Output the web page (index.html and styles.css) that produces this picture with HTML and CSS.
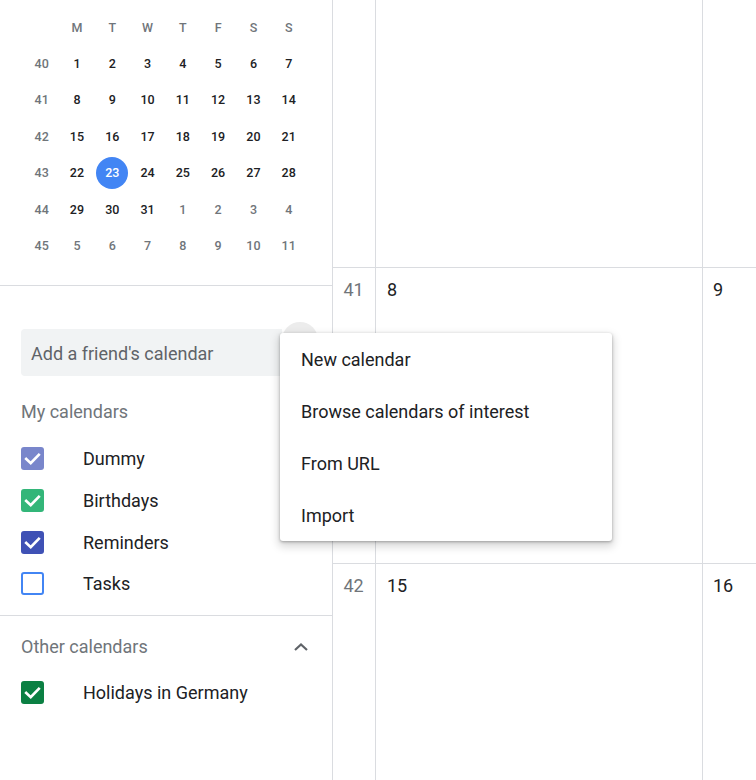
FILE: index.html
```html
<!DOCTYPE html>
<html>
<head>
<meta charset="utf-8">
<link rel="stylesheet" href="styles.css">
</head>
<body>
<div class="app">
  <aside class="sidebar">
    <div class="minical">
      <div class="mc-grid">
        <span></span><span class="hd">M</span><span class="hd">T</span><span class="hd">W</span><span class="hd">T</span><span class="hd">F</span><span class="hd">S</span><span class="hd">S</span>
        <span class="wk">40</span><span>1</span><span>2</span><span>3</span><span>4</span><span>5</span><span>6</span><span>7</span>
        <span class="wk">41</span><span>8</span><span>9</span><span>10</span><span>11</span><span>12</span><span>13</span><span>14</span>
        <span class="wk">42</span><span>15</span><span>16</span><span>17</span><span>18</span><span>19</span><span>20</span><span>21</span>
        <span class="wk">43</span><span>22</span><span><b class="today">23</b></span><span>24</span><span>25</span><span>26</span><span>27</span><span>28</span>
        <span class="wk">44</span><span>29</span><span>30</span><span>31</span><span class="out">1</span><span class="out">2</span><span class="out">3</span><span class="out">4</span>
        <span class="wk">45</span><span class="out">5</span><span class="out">6</span><span class="out">7</span><span class="out">8</span><span class="out">9</span><span class="out">10</span><span class="out">11</span>
      </div>
    </div>
    <div class="add-row">
      <div class="add-input">Add a friend's calendar</div>
      <div class="add-btn"></div>
    </div>
    <div class="sec-title">My calendars</div>
    <ul class="cal-list">
      <li class="cal"><span class="cb c-dummy"><svg viewBox="0 0 22 22"><polyline points="5,11.5 9.3,15.5 17,7.5"/></svg></span>Dummy</li>
      <li class="cal"><span class="cb c-bday"><svg viewBox="0 0 22 22"><polyline points="5,11.5 9.3,15.5 17,7.5"/></svg></span>Birthdays</li>
      <li class="cal"><span class="cb c-rem"><svg viewBox="0 0 22 22"><polyline points="5,11.5 9.3,15.5 17,7.5"/></svg></span>Reminders</li>
      <li class="cal"><span class="cb c-tasks"></span>Tasks</li>
    </ul>
    <div class="other">
      <div class="other-head">
        <span>Other calendars</span>
        <svg class="chev" viewBox="0 0 16 10"><polyline points="2,8 8,2.5 14,8"/></svg>
      </div>
      <ul class="cal-list">
        <li class="cal"><span class="cb c-hol"><svg viewBox="0 0 22 22"><polyline points="5,11.5 9.3,15.5 17,7.5"/></svg></span>Holidays in Germany</li>
      </ul>
    </div>
  </aside>
  <main class="grid">
    <div class="row r1">
      <div class="wkcell"></div>
      <div class="day"></div>
      <div class="day"></div>
    </div>
    <div class="row r2">
      <div class="wkcell">41</div>
      <div class="day">8</div>
      <div class="day">9</div>
    </div>
    <div class="row r3">
      <div class="wkcell">42</div>
      <div class="day">15</div>
      <div class="day">16</div>
    </div>
  </main>
  <div class="menu">
    <div class="menu-item">New calendar</div>
    <div class="menu-item">Browse calendars of interest</div>
    <div class="menu-item">From URL</div>
    <div class="menu-item">Import</div>
  </div>
</div>
</body>
</html>
```
FILE: styles.css
```css
* { box-sizing: border-box; }
html, body { margin: 0; padding: 0; background: #fff; }
body {
  font-family: Roboto, "Noto Sans", "Liberation Sans", sans-serif;
  color: #3c4043;
  width: 756px;
  height: 780px;
  overflow: hidden;
}
.app {
  position: relative;
  display: flex;
  height: 780px;
  overflow: hidden;
}
.sidebar {
  width: 332px;
  flex: none;
}
.minical {
  height: 286px;
  border-bottom: 1px solid #dadce0;
  padding: 9px 0 0 24px;
}
.mc-grid {
  display: grid;
  grid-template-columns: repeat(8, 35.3px);
  grid-auto-rows: 36.4px;
  font-size: 12.5px;
  font-weight: 500;
  color: #202124;
}
.mc-grid span {
  display: flex;
  align-items: center;
  justify-content: center;
}
.mc-grid .hd, .mc-grid .wk, .mc-grid .out { color: #70757a; }
.today {
  width: 32px;
  height: 32px;
  border-radius: 50%;
  background: #4285f4;
  color: #fff;
  font-weight: 500;
  display: flex;
  align-items: center;
  justify-content: center;
}
.add-row {
  display: flex;
  margin: 43px 14px 0 21px;
  height: 47px;
}
.add-input {
  flex: 1;
  background: #f1f3f4;
  border-radius: 4px 0 0 4px;
  font-size: 18px;
  color: #5f6368;
  padding: 2px 0 0 10px;
  display: flex;
  align-items: center;
}
.add-btn {
  width: 36px;
  height: 36px;
  border-radius: 50%;
  background: #ececec;
  margin-top: -7px;
  flex: none;
}
.sec-title {
  margin: 24px 0 14px 21px;
  line-height: 24px;
  font-size: 18px;
  color: #70757a;
}
.cal-list {
  list-style: none;
  margin: 0;
  padding: 0;
}
.cal {
  height: 41.7px;
  display: flex;
  align-items: center;
  padding-left: 21px;
  font-size: 18px;
  color: #202124;
}
.cb {
  width: 23px;
  height: 23px;
  border-radius: 3px;
  margin-right: 39px;
  display: flex;
  flex: none;
}
.cb svg { width: 23px; height: 23px; }
.cb polyline {
  fill: none;
  stroke: #fff;
  stroke-width: 2.6;
  stroke-linecap: square;
}
.c-dummy { background: #7986cb; }
.c-bday { background: #33b679; }
.c-rem { background: #3f51b5; }
.c-tasks { border: 2px solid #4285f4; }
.c-hol { background: #0b8043; }
.other {
  margin-top: 10px;
  border-top: 1px solid #dadce0;
}
.other-head {
  display: flex;
  align-items: center;
  justify-content: space-between;
  padding: 19px 23px 13px 21px;
  line-height: 24px;
  font-size: 18px;
  color: #70757a;
}
.chev { width: 16px; height: 10px; }
.chev polyline {
  fill: none;
  stroke: #5f6368;
  stroke-width: 2.2;
}
.grid {
  flex: 1;
  border-left: 1px solid #dadce0;
  display: flex;
  flex-direction: column;
  overflow: hidden;
}
.row {
  display: flex;
  border-bottom: 1px solid #dadce0;
}
.r1 { height: 268px; }
.r2 { height: 296px; }
.r3 { flex: 1; border-bottom: none; }
.wkcell {
  width: 43px;
  flex: none;
  border-right: 1px solid #dadce0;
  text-align: center;
  font-size: 18px;
  color: #70757a;
  padding-top: 12px;
  line-height: 20px;
  padding-right: 1px;
}
.day {
  width: 327px;
  flex: none;
  border-right: 1px solid #dadce0;
  padding: 12px 0 0 11px;
  font-size: 18px;
  line-height: 20px;
  color: #202124;
}
.day + .day { border-right: none; padding-left: 10px; width: auto; flex: 1; }
.menu {
  position: absolute;
  left: 280px;
  top: 333px;
  width: 332px;
  background: #fff;
  border-radius: 3px;
  box-shadow: 0 4px 8px 2px rgba(0,0,0,0.15), 0 1px 3px rgba(0,0,0,0.3);
}
.menu-item {
  height: 52px;
  display: flex;
  align-items: center;
  padding-left: 21px;
  font-size: 18px;
  color: #202124;
}
```
